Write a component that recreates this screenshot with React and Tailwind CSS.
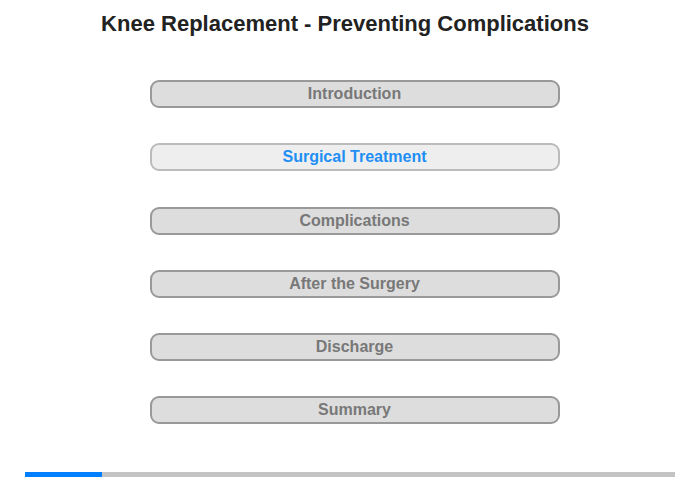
import React from 'react';

const sections = [
  'Introduction',
  'Surgical Treatment',
  'Complications',
  'After the Surgery',
  'Discharge',
  'Summary',
];

const active = 1;

export default function App() {
  return (
    <div className="w-[700px] h-[480px] bg-white font-['Liberation_Sans',Arial,sans-serif] flex flex-col">
      <h1 className="mt-[10px] pr-[10px] h-[28px] text-center text-[22px] leading-[28px] font-bold text-[#222]">
        Knee Replacement - Preventing Complications
      </h1>

      {/* Chapter menu */}
      <div className="mt-[42px] pl-[9px] flex flex-col items-center gap-[35.3px]">
        {sections.map((label, i) => (
          <div
            key={label}
            className={`w-[410px] h-[28px] rounded-[9px] border-2 flex items-center justify-center text-[16px] font-bold ${
              i === active
                ? 'bg-[#eeeeee] border-[#bbbbbb] text-[#1e8ff5]'
                : 'bg-[#dddddd] border-[#999999] text-[#787878]'
            }`}
          >
            {label}
          </div>
        ))}
      </div>

      {/* Progress */}
      <div className="mt-auto mb-[3px] mx-[25px] h-[5px] bg-[#c4c4c4] flex">
        <div className="w-[77px] h-full bg-[#0080ff]" />
      </div>
    </div>
  );
}
